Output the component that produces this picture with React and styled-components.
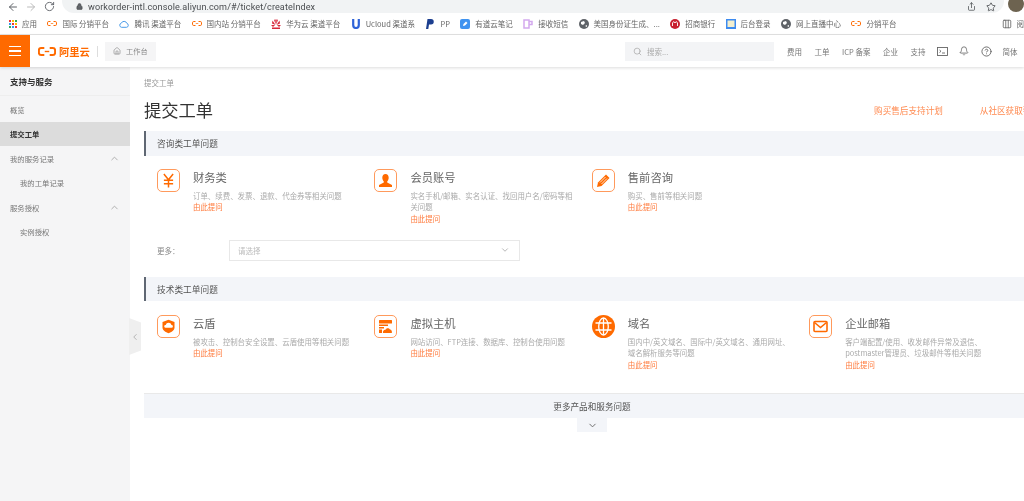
import React from "react";
import styled, { createGlobalStyle } from "styled-components";
import { ArrowLeft, ArrowRight, RotateCw, Lock, Share, Star, Home, Search, ChevronUp, ChevronDown, ChevronLeft, Bell, CircleHelp, Columns3 } from "lucide-react";

const ORANGE = "#ff6a00";
const CJK = `"Noto Sans CJK SC", "Liberation Sans", sans-serif`;

const Global = createGlobalStyle`
  html, body { margin: 0; padding: 0; background: #fff; overflow: hidden; }
  * { box-sizing: border-box; }
`;

const Page = styled.div`
  width: 1024px; height: 501px; overflow: hidden;
  display: flex; flex-direction: column;
  font-family: ${CJK}; color: #555; background: #fff;
  filter: blur(0.45px);
`;

const AddressRow = styled.div`
  height: 13px; display: flex; align-items: center; color: #5f6368;
  padding-left: 4px; overflow: hidden; flex: none;
`;
const NavBtn = styled.span`
  width: 20px; display: flex; justify-content: center; color: ${p => p.$dim ? "#bbb" : "#5f6368"};
`;
const Pill = styled.div`
  margin-left: 3px; width: 942px; height: 13px; background: #f1f3f4; flex: none;
  border-radius: 0 0 12px 12px; display: flex; align-items: center; padding: 0 8px; gap: 6px;
  font: 9.05px "Roboto", sans-serif; color: #4a4d50; letter-spacing: .1px;
`;
const LockSlot = styled.span` display: flex; width: 13px; justify-content: flex-end; margin-right: -1px; `;
const Url = styled.span` flex: 1; white-space: nowrap; `;
const Avatar = styled.span`
  width: 16px; height: 16px; border-radius: 50%; background: #6d6350; margin: -5px 0 0 4px; flex: none;
`;

const BookmarkBar = styled.div`
  height: 22px; flex: none; display: flex; align-items: center; padding-left: 9px; gap: 10.4px;
  font-size: 7.5px; color: #666; border-bottom: 1px solid #e4e4e4; white-space: nowrap;
`;
const Bookmark = styled.span` display: inline-flex; align-items: center; gap: 5px; `;
const BarEnd = styled.span`
  margin-left: auto; display: inline-flex; align-items: center; gap: 5px; color: #666;
`;
const AppsGrid = styled.span`
  display: grid; grid-template-columns: repeat(3, 2px); gap: 1px;
  i { width: 2px; height: 2px; display: block; }
`;

const TopBar = styled.header`
  height: 32px; flex: none; display: flex; align-items: center; background: #fff;
  box-shadow: 0 1px 3px rgba(0,0,0,.14); position: relative; z-index: 2;
`;
const Burger = styled.button`
  width: 30px; height: 32px; border: 0; background: ${ORANGE}; display: flex; flex-direction: column;
  align-items: center; justify-content: center; gap: 3px; padding: 0;
  i { width: 12px; height: 1.5px; background: #fff; display: block; }
`;
const Logo = styled.div`
  margin-left: 8px; display: flex; align-items: center; gap: 3px; color: ${ORANGE};
  font-size: 10.3px; font-weight: 700; width: 59px;
`;
const Sep = styled.span` width: 1px; height: 11px; background: #ddd; `;
const WorkBtn = styled.div`
  margin-left: 7px; width: 51px; height: 19px; background: #f5f5f6; display: flex; align-items: center;
  gap: 5px; padding-left: 8px; font-size: 7.2px; color: #888;
`;
const SearchBox = styled.div`
  margin-left: 469px; width: 149px; height: 19px; background: #f3f4f6; display: flex; align-items: center;
  gap: 5px; padding-left: 8px; font-size: 7.5px; color: #aaa;
`;
const TopNav = styled.nav`
  margin-left: 13px; display: flex; align-items: center; gap: 12.5px; font-size: 7.5px; color: #777; white-space: nowrap;
`;
const NavIcons = styled.span`
  display: flex; align-items: center; gap: 11.5px; margin: 0 -2px 0 -1px; color: #666;
`;

const Body = styled.div` flex: 1; display: flex; min-height: 0; position: relative; `;

const Sidebar = styled.aside` width: 130px; flex: none; background: #f5f5f6; `;
const SideTitle = styled.div`
  height: 29px; display: flex; align-items: center; padding-left: 10px; font-size: 8.5px; font-weight: 700;
  color: #333; border-bottom: 1px solid #eeeeee; margin-bottom: 1px;
`;
const SideItem = styled.div`
  height: 24.5px; display: flex; align-items: center; justify-content: space-between;
  padding: 0 10px 0 ${p => p.$sub ? 20 : 10}px; font-size: 7.35px;
  color: ${p => p.$active ? "#333" : "#777"}; font-weight: ${p => p.$active ? 700 : 400};
  background: ${p => p.$active ? "#dcdcdc" : "transparent"};
`;
const Collapse = styled.div`
  position: absolute; left: 129px; top: 251px; width: 12px; height: 37px; background: #efefef;
  clip-path: polygon(0 0, 100% 12%, 100% 88%, 0 100%);
  display: flex; align-items: center; justify-content: center; color: #aaa;
`;

const Main = styled.main` flex: 1; min-width: 0; overflow: hidden; padding-left: 14px; `;
const Content = styled.div` width: 896px; `;
const Crumb = styled.div` height: 30px; display: flex; align-items: center; font-size: 7.5px; color: #999; `;
const TitleRow = styled.div`
  height: 26px; display: flex; align-items: center; justify-content: flex-end; gap: 37px; margin-bottom: 8px;
`;
const PageTitle = styled.h1`
  margin: 0 auto 0 0; font-size: 17.3px; font-weight: 400; color: #333; line-height: 26px;
`;
const TopLink = styled.a` font-size: 8.6px; color: #ff8a50; white-space: nowrap; `;
const SectionHead = styled.div`
  height: ${p => p.$h}px; background: #f3f5f9; border-left: 2px solid #5f6773; display: flex; align-items: center;
  padding-left: 11px; font-size: 8.7px; color: #555;
`;
const CardGrid = styled.div`
  display: grid; grid-template-columns: repeat(4, 217.4px); padding-left: 13px; margin-top: ${p => p.$mt}px; height: ${p => p.$h}px;
`;
const Card = styled.div` display: flex; gap: 13px; `;
const IconFrame = styled.div`
  width: 23px; height: 23px; flex: none; border: ${p => p.$plain ? "0" : `1px solid #ff9a5c`}; border-radius: 5px;
  display: flex; align-items: center; justify-content: center; color: ${ORANGE};
`;
const CardBody = styled.div` width: 165px; `;
const CardTitle = styled.div` font-size: 11.3px; line-height: 16px; color: #666; margin-bottom: 4.5px; `;
const CardDesc = styled.div` font-size: 7.45px; line-height: 11.5px; color: #aaa; `;
const AskLink = styled.a` display: block; font-size: 7.45px; line-height: 11.5px; color: #ff7a3c; `;
const MoreRow = styled.div`
  display: flex; align-items: center; padding-left: 13px; height: 20px; margin-bottom: 17px; font-size: 7.5px; color: #888;
`;
const MoreLabel = styled.span` width: 72px; `;
const FakeSelect = styled.div`
  width: 291px; height: 21px; border: 1px solid #e8e8e8; display: flex; align-items: center; justify-content: space-between;
  padding: 0 9px 0 8px; color: #bbb;
`;
const MoreBar = styled.div`
  height: 25px; background: #f3f5f9; border-top: 1px solid #e9e9e9; display: flex; align-items: center; justify-content: center;
  font-size: 8.6px; color: #555;
`;
const MoreTab = styled.div`
  width: 30px; height: 14px; background: #f3f5f9; margin: 0 auto; display: flex; align-items: center; justify-content: center; color: #666;
`;

const AliMark = ({ size = 20, h = 10, sw = 2 }) => (
  <svg width={size} height={h} viewBox="0 0 20 10" fill="none" stroke={ORANGE} strokeWidth={sw}>
    <path d="M7 1H3.5Q1 1 1 3.5v3Q1 9 3.5 9H7M13 1h3.500Q19 1 19 3.500v3Q19 9 16.500 9H13" />
    <path d="M7.500 5h5" strokeWidth={sw * .7} />
  </svg>
);
const GlobeMini = () => (
  <svg width="10" height="10" viewBox="0 0 10 10"><circle cx="5" cy="5" r="5" fill="#5f6368" /><path d="M2 3l3-1 1 2-2 2-2-1zM6 7l2-1v2z" fill="#fff" /></svg>
);
const TencentCloud = () => (
  <svg width="10" height="8" viewBox="0 0 10 8" fill="none" stroke="#4a9be8" strokeWidth="1">
    <path d="M2.500 7.300h5a2 2 0 0 0 .4-3.900 3 3 0 0 0-5.600-.2A2.100 2.100 0 0 0 2.500 7.300z" />
  </svg>
);
const Huawei = () => (
  <svg width="10" height="10" viewBox="0 0 10 10" fill="#d8263a">
    <path d="M4.500 6L1 4.500 1.500 1.500zM5.500 6L9 4.500 8.500 1.500zM4.600 5.500L3 .8 4.800.4zM5.400 5.500L7 .8 5.200.4z" />
    <path d="M0 6h4L2 8zM10 6H6l2 2zM1 8.500h8V10H1z" />
  </svg>
);
const UMark = () => (
  <svg width="10" height="10" viewBox="0 0 10 10" fill="none" stroke="#2f63d8" strokeWidth="2.200">
    <path d="M2.200 0v6a2.800 3 0 0 0 5.600 0V0" />
  </svg>
);
const PayPal = () => (
  <svg width="10" height="10" viewBox="0 0 10 10">
    <path d="M2.500 0H6a2.700 2.700 0 0 1 0 5.500H4L3.300 10H1z" fill="#1c3f8f" />
  </svg>
);
const Note = () => (
  <svg width="10" height="10" viewBox="0 0 10 10">
    <rect width="10" height="10" rx="2" fill="#3f93f0" />
    <path d="M3 7l.5-2 2.500-2.500 1.500 1.500L5 6.500z" fill="#fff" />
  </svg>
);
const SmsMark = () => (
  <svg width="10" height="10" viewBox="0 0 10 10" fill="none" stroke="#d3a9ee" strokeWidth="1.500">
    <path d="M1 1h5v8H1zM6 2.500h3v3H6" />
  </svg>
);
const CmbMark = () => (
  <svg width="10" height="10" viewBox="0 0 10 10">
    <circle cx="5" cy="5" r="5" fill="#c8202f" />
    <path d="M2.500 7V4l1.200-1.500L5 4l1.300-1.500L7.500 4v3" fill="none" stroke="#fff" strokeWidth=".9" />
  </svg>
);
const AdminMark = () => (
  <svg width="10" height="10" viewBox="0 0 10 10">
    <rect width="10" height="10" fill="#3d8bf0" />
    <rect x="1.500" y="1.500" width="7" height="6.500" fill="#f3efcf" />
  </svg>
);
const Yen = () => (
  <svg width="15" height="15" viewBox="0 0 13 13" fill="none" stroke={ORANGE} strokeWidth="1.300">
    <path d="M2.500 .8l4 5 4-5M6.500 5.800v6.700M2.500 6.300h8M2.500 9.300h8" />
  </svg>
);
const User = () => (
  <svg width="15" height="15" viewBox="0 0 15 15" fill={ORANGE}>
    <path d="M7.500 1C5.500 1 4.300 2.600 4.300 4.800c0 1.500.7 2.800 1.500 3.600v1.200L1 12v2h13v-2L9.200 9.600V8.400c.8-.8 1.500-2.100 1.500-3.600C10.700 2.600 9.500 1 7.500 1z" />
  </svg>
);
const Pencil = () => (
  <svg width="15" height="15" viewBox="0 0 15 15" fill={ORANGE}>
    <path d="M1 14l1-4.500L10 1.500 13.500 5 5.500 13z" />
    <path d="M4 9.500l5.500-5.500M5.500 11L11 5.500" stroke="#fff" strokeWidth=".8" />
  </svg>
);
const Shield = () => (
  <svg width="15" height="15" viewBox="0 0 15 15">
    <path d="M7.500.8L13.500 3v5.500c0 2.700-3 4.800-6 5.700-3-.9-6-3-6-5.700V3z" fill={ORANGE} />
    <path d="M4.500 8.800h6a1.400 1.400 0 0 0 0-2.800 3 3 0 0 0-5.800 0 1.400 1.400 0 0 0-.2 2.800z" fill="#fff" />
  </svg>
);
const Host = () => (
  <svg width="15" height="15" viewBox="0 0 15 15" fill={ORANGE}>
    <rect x="1" y="1" width="13" height="3.500" rx=".5" />
    <path d="M1 5.500h9v1.500H1zM1 8h5v1.500H1zM1 10.500h3V14H1z" />
    <path d="M5 14c-.5-2 1-3.500 2.500-3.300C8 8.800 11 8.500 12 10.500c1.500 0 2.300 2 1.800 3.500z" />
  </svg>
);
const GlobeBig = () => (
  <svg width="23" height="23" viewBox="0 0 23 23" fill="none">
    <circle cx="11.500" cy="11.500" r="11.500" fill={ORANGE} />
    <g stroke="#fff" strokeWidth="1.300">
      <ellipse cx="11.500" cy="11.500" rx="4.800" ry="8.500" />
      <path d="M11.500 3v17M3.500 8h16M3.500 15h16" />
    </g>
  </svg>
);
const Mail = () => (
  <svg width="15" height="13" viewBox="0 0 15 13" fill="none" stroke={ORANGE} strokeWidth="1.600">
    <rect x="1" y="1.500" width="13" height="10" rx="1" />
    <path d="M1.500 2.500l6 5 6-5" />
  </svg>
);
const Terminal = () => (
  <svg width="11" height="9" viewBox="0 0 11 9" fill="none" stroke="#666" strokeWidth=".9">
    <rect x=".5" y=".5" width="10" height="8" />
    <path d="M2.500 3l1.500 1.300L2.500 5.500M5 6h3" />
  </svg>
);

const bookmarks = [
  [<AliMark size={10} h={7} sw={2} />, "国际 分销平台"],
  [<TencentCloud />, "腾讯 渠道平台"],
  [<AliMark size={10} h={7} sw={2} />, "国内站 分销平台"],
  [<Huawei />, "华为云 渠道平台"],
  [<UMark />, "Ucloud 渠道系"],
  [<PayPal />, "PP"],
  [<Note />, "有道云笔记"],
  [<SmsMark />, "接收短信"],
  [<GlobeMini />, "美国身份证生成、..."],
  [<CmbMark />, "招商银行"],
  [<AdminMark />, "后台登录"],
  [<GlobeMini />, "网上直播中心"],
  [<AliMark size={10} h={7} sw={2} />, "分销平台"],
];

const consult = [
  [<Yen />, "财务类", "订单、续费、发票、退款、代金券等相关问题"],
  [<User />, "会员账号", "实名手机/邮箱、实名认证、找回用户名/密码等相关问题"],
  [<Pencil />, "售前咨询", "购买、售前等相关问题"],
];
const tech = [
  [<Shield />, "云盾", "被攻击、控制台安全设置、云盾使用等相关问题"],
  [<Host />, "虚拟主机", "网站访问、FTP连接、数据库、控制台使用问题"],
  [<GlobeBig />, "域名", "国内中/英文域名、国际中/英文域名、通用网址、域名解析服务等问题", true],
  [<Mail />, "企业邮箱", "客户端配置/使用、收发邮件异常及退信、postmaster管理员、垃圾邮件等相关问题"],
];

const renderCards = list => list.map(([icon, title, desc, plain]) => (
  <Card key={title}>
    <IconFrame $plain={plain}>{icon}</IconFrame>
    <CardBody>
      <CardTitle>{title}</CardTitle>
      <CardDesc>{desc}</CardDesc>
      <AskLink>由此提问</AskLink>
    </CardBody>
  </Card>
));

export default function App() {
  return (
    <Page>
      <Global />
      <AddressRow>
        <NavBtn><ArrowLeft size={12} /></NavBtn>
        <NavBtn $dim><ArrowRight size={12} /></NavBtn>
        <NavBtn><RotateCw size={11} /></NavBtn>
        <Pill>
          <LockSlot><Lock size={7} fill="#5f6368" /></LockSlot>
          <Url>workorder-intl.console.aliyun.com/#/ticket/createIndex</Url>
          <Share size={9} />
          <Star size={10} style={{ marginLeft: 4 }} />
        </Pill>
        <Avatar />
      </AddressRow>
      <BookmarkBar>
        <Bookmark>
          <AppsGrid>
            {["#e33","#fb0","#3a5","#39e","#e33","#fb0","#3a5","#39e","#e33"].map((c, i) => <i key={i} style={{ background: c }} />)}
          </AppsGrid>
          应用
        </Bookmark>
        {bookmarks.map(([icon, label]) => <Bookmark key={label}>{icon}{label}</Bookmark>)}
        <BarEnd><Columns3 size={10} />阅</BarEnd>
      </BookmarkBar>
      <TopBar>
        <Burger><i /><i /><i /></Burger>
        <Logo><AliMark size={18} h={11} sw={2.2} />阿里云</Logo>
        <Sep />
        <WorkBtn><Home size={8} />工作台</WorkBtn>
        <SearchBox><Search size={9} />搜索...</SearchBox>
        <TopNav>
          <span>费用</span><span>工单</span><span>ICP 备案</span><span>企业</span><span>支持</span>
          <NavIcons><Terminal /><Bell size={10} /><CircleHelp size={11} /></NavIcons>
          <span>简体</span>
        </TopNav>
      </TopBar>
      <Body>
        <Sidebar>
          <SideTitle>支持与服务</SideTitle>
          <SideItem>概览</SideItem>
          <SideItem $active>提交工单</SideItem>
          <SideItem>我的服务记录<ChevronUp size={11} color="#aaa" /></SideItem>
          <SideItem $sub>我的工单记录</SideItem>
          <SideItem>服务授权<ChevronUp size={11} color="#aaa" /></SideItem>
          <SideItem $sub>实例授权</SideItem>
        </Sidebar>
        <Collapse><ChevronLeft size={10} /></Collapse>
        <Main>
          <Content>
            <Crumb>提交工单</Crumb>
            <TitleRow>
              <PageTitle>提交工单</PageTitle>
              <TopLink>购买售后支持计划</TopLink>
              <TopLink>从社区获取帮助</TopLink>
            </TitleRow>
            <SectionHead $h={25}>咨询类工单问题</SectionHead>
            <CardGrid $mt={13} $h={71}>{renderCards(consult)}</CardGrid>
            <MoreRow>
              <MoreLabel>更多：</MoreLabel>
              <FakeSelect>请选择<ChevronDown size={10} color="#aaa" /></FakeSelect>
            </MoreRow>
            <SectionHead $h={24}>技术类工单问题</SectionHead>
            <CardGrid $mt={14} $h={78}>{renderCards(tech)}</CardGrid>
            <MoreBar>更多产品和服务问题</MoreBar>
            <MoreTab><ChevronDown size={11} /></MoreTab>
          </Content>
        </Main>
      </Body>
    </Page>
  );
}
